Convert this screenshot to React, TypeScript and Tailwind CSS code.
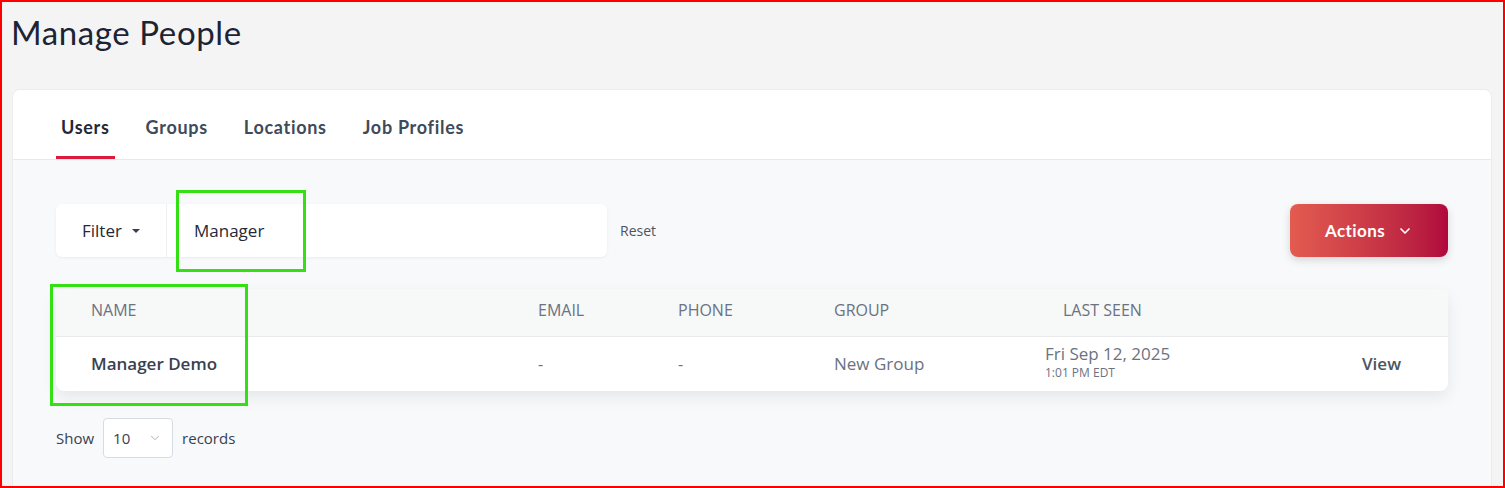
import { ChevronDown } from "lucide-react";

const tabs = ["Users", "Groups", "Locations", "Job Profiles"];

const columns = "grid grid-cols-[447px_140px_156px_211px_200px_1fr] pl-[35px] pr-[47px]";

function Highlight({ className }: { className: string }) {
  return <div className={`pointer-events-none absolute border-[3px] border-[#33e014] ${className}`} />;
}

export default function App() {
  return (
    <div className="relative h-[488px] w-[1505px] overflow-hidden border-2 border-[#ff0000] bg-[#f4f4f4] font-['Lato',sans-serif]">
      <h1 className="pl-[9px] pt-[9px] text-[33px] leading-[42px] tracking-[0.6px] text-[#1c2434]">Manage People</h1>

      <div className="ml-[10px] mr-[11px] mt-[36px] h-[420px] overflow-hidden rounded-lg border border-[#ececec] bg-[#f8f9fb]">
        {/* Tabs */}
        <div className="flex h-[70px] items-end gap-[26px] border-b border-[#e6e8eb] bg-white pl-[43px]">
          {tabs.map((tab, i) => (
            <div
              key={tab}
              className={`flex h-full items-center border-b-[3px] px-[5px] pt-[9px] text-[18px] font-bold tracking-[0.7px] ${
                i === 0 ? "border-[#dc1a3c] text-[#1f2937]" : "border-transparent text-[#3f4a5a]"
              }`}
            >
              {tab}
            </div>
          ))}
        </div>

        <div className="px-[43px] pt-[44px]">
          {/* Filter bar */}
          <div className="flex items-center font-['Open_Sans',sans-serif]">
            <div className="flex h-[53px] w-[551px] rounded-md bg-white shadow-[0_1px_3px_rgba(0,0,0,0.06)]">
              <button className="flex w-[111px] items-center gap-[10px] border-r border-[#eef0f2] pl-[26px] text-[17px] text-[#1f2937]">
                Filter
                <span className="mt-[1px] h-0 w-0 border-x-[4px] border-t-[4px] border-x-transparent border-t-[#374151]" />
              </button>
              <div className="flex items-center pl-[27px] text-[17px] text-[#1f2937]">Manager</div>
            </div>
            <span className="ml-[13px] text-[14px] text-[#4b5563]">Reset</span>
            <button className="ml-auto flex h-[53px] w-[158px] items-center justify-center gap-[12px] rounded-lg bg-gradient-to-r from-[#e35b50] to-[#b1063d] font-['Lato',sans-serif] text-[17px] font-bold tracking-[0.4px] text-white shadow-[0_3px_8px_rgba(0,0,0,0.15)]">
              Actions
              <ChevronDown className="h-4 w-4" strokeWidth={2.5} />
            </button>
          </div>

          {/* Users table */}
          <div className="mt-[32px] overflow-hidden rounded-lg bg-white font-['Open_Sans',sans-serif] shadow-[0_6px_16px_rgba(0,0,0,0.08)]">
            <div className={`${columns} h-[48px] items-center border-b border-[#e8eaec] bg-[#f7f8f8] pb-[6px] text-[16px] text-[#6b7280]`}>
              <span>NAME</span>
              <span>EMAIL</span>
              <span>PHONE</span>
              <span>GROUP</span>
              <span className="pl-[18px]">LAST SEEN</span>
              <span />
            </div>
            <div className={`${columns} h-[54px] items-center text-[#6b7280]`}>
              <span className="text-[17px] font-semibold text-[#374151]">Manager Demo</span>
              <span className="text-[16px]">-</span>
              <span className="text-[16px]">-</span>
              <span className="text-[17px]">New Group</span>
              <div className="-mt-[5px] flex flex-col leading-none">
                <span className="text-[17px]">Fri Sep 12, 2025</span>
                <span className="mt-[5px] text-[12px]">1:01 PM EDT</span>
              </div>
              <span className="text-right text-[17px] font-semibold text-[#4b5563]">View</span>
            </div>
          </div>

          {/* Page size */}
          <div className="mt-[27px] flex items-center font-['Open_Sans',sans-serif] text-[15px] text-[#374151]">
            <span>Show</span>
            <div className="ml-[9px] flex h-[40px] w-[70px] items-center justify-between rounded border border-[#d8dbe0] bg-white pl-[9px] pr-[10px]">
              <span className="text-[15px]">10</span>
              <ChevronDown className="h-[14px] w-[14px] text-[#9ca3af]" strokeWidth={1.5} />
            </div>
            <span className="ml-[9px]">records</span>
          </div>
        </div>
      </div>

      <Highlight className="left-[174px] top-[188px] h-[82px] w-[130px]" />
      <Highlight className="left-[48px] top-[282px] h-[122px] w-[198px]" />
    </div>
  );
}
